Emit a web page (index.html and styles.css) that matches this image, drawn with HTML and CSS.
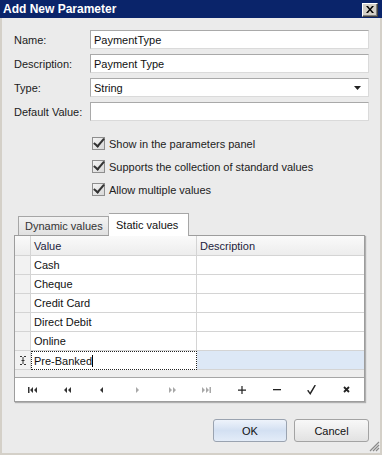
FILE: index.html
```html
<!DOCTYPE html>
<html lang="en">
<head>
    <meta charset="UTF-8">
    <title>Add New Parameter</title>
    <link rel="stylesheet" href="styles.css">
</head>
<body>
<div class="dialog">
    <div class="titlebar">
        <span>Add New Parameter</span>
        <button class="close-button">
            <svg width="8" height="7" viewBox="0 0 8 7"><path d="M0 0h2l2 2.5L6 0h2L5 3.5 8 7H6L4 4.5 2 7H0l3-3.5z" fill="#000"/></svg>
        </button>
    </div>

    <div class="content">
        <div class="field">
            <label>Name:</label>
            <div class="input">PaymentType</div>
        </div>
        <div class="field">
            <label>Description:</label>
            <div class="input">Payment Type</div>
        </div>
        <div class="field">
            <label>Type:</label>
            <div class="input select">String
                <svg width="7" height="4" viewBox="0 0 7 4"><path d="M0 0h7L3.5 4z" fill="#222"/></svg>
            </div>
        </div>
        <div class="field">
            <label>Default Value:</label>
            <div class="input"></div>
        </div>

        <div class="checks">
            <div class="check"><span class="box"></span>Show in the parameters panel</div>
            <div class="check"><span class="box"></span>Supports the collection of standard values</div>
            <div class="check"><span class="box"></span>Allow multiple values</div>
        </div>

        <div class="tabs">
            <div class="tab">Dynamic values</div>
            <div class="tab active">Static values</div>
        </div>

        <div class="grid">
            <div class="row header">
                <div class="ind"></div>
                <div class="cell">Value</div>
                <div class="cell">Description</div>
            </div>
            <div class="row"><div class="ind"></div><div class="cell">Cash</div><div class="cell"></div></div>
            <div class="row"><div class="ind"></div><div class="cell">Cheque</div><div class="cell"></div></div>
            <div class="row"><div class="ind"></div><div class="cell">Credit Card</div><div class="cell"></div></div>
            <div class="row"><div class="ind"></div><div class="cell">Direct Debit</div><div class="cell"></div></div>
            <div class="row"><div class="ind"></div><div class="cell">Online</div><div class="cell"></div></div>
            <div class="row selected">
                <div class="ind">
                    <svg width="6" height="9" viewBox="0 0 6 9"><path d="M0 .5h2m2 0h2M3 1v7M0 8.5h2m2 0h2M1.5 4.5h3" stroke="#333" fill="none"/></svg>
                </div>
                <div class="cell editing">Pre-Banked<span class="caret"></span></div>
                <div class="cell"></div>
            </div>
            <div class="grid-empty"></div>
            <div class="navigator">
                <span><svg width="9" height="6" viewBox="0 0 9 6"><path d="M0 0h1.5v6H0zM5 0v6L2 3zM9 0v6L6 3z" fill="#333"/></svg></span>
                <span><svg width="7" height="6" viewBox="0 0 7 6"><path d="M3 0v6L0 3zM7 0v6L4 3z" fill="#333"/></svg></span>
                <span><svg width="4" height="6" viewBox="0 0 4 6"><path d="M3 0v6L0 3z" fill="#333"/></svg></span>
                <span><svg width="4" height="6" viewBox="0 0 4 6"><path d="M1 0v6l3-3z" fill="#a8a8a8"/></svg></span>
                <span><svg width="7" height="6" viewBox="0 0 7 6"><path d="M0 0v6l3-3zM4 0v6l3-3z" fill="#a8a8a8"/></svg></span>
                <span><svg width="9" height="6" viewBox="0 0 9 6"><path d="M0 0v6l3-3zM4 0v6l3-3zM7.5 0H9v6H7.5z" fill="#a8a8a8"/></svg></span>
                <span><svg width="8" height="8" viewBox="0 0 8 8"><path d="M0 3.5h8v1.2H0zM3.4 0h1.2v8H3.4z" fill="#222"/></svg></span>
                <span><svg width="8" height="2" viewBox="0 0 8 2"><path d="M0 0h8v1.3H0z" fill="#222"/></svg></span>
                <span><svg width="9" height="10" viewBox="0 0 9 10"><path d="M0 5.5 1.5 5 3 7.5 7.5 0 9 .3 3.3 10z" fill="#222"/></svg></span>
                <span><svg width="7" height="7" viewBox="0 0 7 7"><path d="M1 1l5 5M6 1 1 6" stroke="#222" stroke-width="1.8"/></svg></span>
            </div>
        </div>

        <div class="actions">
            <button class="btn default">OK</button>
            <button class="btn">Cancel</button>
        </div>

        <svg class="grip" width="11" height="11" viewBox="0 0 11 11"><path d="M10 1 1 10M10 4 4 10M10 7 7 10" stroke="#8a8a8a" stroke-width="1.2"/></svg>
    </div>
</div>
</body>
</html>
```

FILE: styles.css
```css
body {
    margin: 0;
    font-family: 'Liberation Sans', Arial, sans-serif;
    font-size: 11px;
    color: #1b1b1b;
}
.dialog {
    width: 382px;
    height: 455px;
    display: flex;
    flex-direction: column;
    background-color: #ebebeb;
}
.titlebar {
    height: 18px;
    flex-shrink: 0;
    background-color: #0a246a;
    color: #fff;
    font-size: 12px;
    font-weight: bold;
    display: flex;
    align-items: center;
    justify-content: space-between;
    padding: 0 4px 0 3px;
}
.close-button {
    width: 16px;
    height: 14px;
    padding: 0;
    margin-top: 1px;
    background-color: #d4d0c8;
    border: 1px solid;
    border-color: #fff #404040 #404040 #fff;
    box-shadow: inset -1px -1px 0 #808080;
    display: flex;
    align-items: center;
    justify-content: center;
}
.content {
    flex: 1;
    position: relative;
    border: 2px solid #d4d0c8;
    border-top: none;
    padding: 12px 11px 0 12px;
}
.field {
    display: flex;
    align-items: center;
    height: 19px;
    margin-bottom: 5px;
}
.field label {
    width: 76px;
}
.input {
    flex: 1;
    height: 19px;
    box-sizing: border-box;
    background-color: #fff;
    border: 1px solid;
    border-color: #a9a9a9 #dadada #dadada #a9a9a9;
    padding: 0 3px;
    display: flex;
    align-items: center;
    justify-content: space-between;
    color: #111;
}
.input.select svg {
    margin-right: 4px;
}
.checks {
    margin-top: 11px;
    padding-left: 78px;
}
.check {
    height: 23px;
    display: flex;
    align-items: center;
    color: #222;
}
.box {
    width: 11px;
    height: 11px;
    margin-right: 4px;
    border: 1px solid #8e8e8e;
    background: linear-gradient(135deg, #f4f4f4, #d8d8d8);
    position: relative;
}
.box::after {
    content: '';
    position: absolute;
    left: 3px;
    top: -2px;
    width: 4px;
    height: 9px;
    border: solid #333;
    border-width: 0 2px 2px 0;
    transform: rotate(40deg);
}
.tabs {
    margin-top: 12px;
    height: 22px;
    display: flex;
    align-items: flex-end;
    padding-left: 4px;
}
.tab {
    height: 19px;
    box-sizing: border-box;
    padding: 0 6px;
    white-space: nowrap;
    display: flex;
    align-items: center;
    border: 1px solid #a6a6a6;
    border-bottom: none;
    background: linear-gradient(#f3f3f3, #e0e0e0);
    color: #333;
    width: 91px;
}
.tab.active {
    height: 23px;
    margin-bottom: -1px;
    position: relative;
    z-index: 1;
    width: 80px;
    padding-left: 7px;
    background-color: #fff;
    background-image: none;
    color: #111;
    border-left: none;
}
.grid {
    margin-right: 4px;
    border: 1px solid #9d9d9d;
    background-color: #ececec;
    box-shadow: 1px 1px 1px rgba(0, 0, 0, 0.25);
}
.row {
    display: grid;
    grid-template-columns: 16px 166px 1fr;
    height: 19px;
    background-color: #fff;
}
.row .ind {
    background-color: #f2f2f2;
    border-right: 1px solid #d4d4d4;
    border-bottom: 1px solid #d4d4d4;
    display: flex;
    align-items: center;
    justify-content: center;
}
.row .cell {
    border-right: 1px solid #d4d4d4;
    border-bottom: 1px solid #d4d4d4;
    padding-left: 3px;
    display: flex;
    align-items: center;
    color: #111;
}
.row .cell:last-child {
    border-right: none;
}
.row.header {
    height: 20px;
    background: linear-gradient(#fafafa, #ececec);
}
.row.header .ind,
.row.header .cell {
    background: none;
    color: #1c1c3c;
}
.row.selected .cell:last-child {
    background-color: #dde8f6;
}
.row .cell.editing {
    border: 1px dotted #222;
    padding-left: 2px;
}
.caret {
    width: 1px;
    height: 12px;
    background-color: #000;
}
.grid-empty {
    height: 7px;
    background-color: #eeeeee;
}
.navigator {
    height: 23px;
    border-top: 1px solid #a6a6a6;
    background-color: #fff;
    display: flex;
}
.navigator span {
    flex: 1;
    display: flex;
    align-items: center;
    justify-content: center;
}
.actions {
    display: flex;
    justify-content: flex-end;
    gap: 7px;
    margin-top: 17px;
}
.btn {
    width: 75px;
    height: 23px;
    font-family: inherit;
    font-size: 11px;
    color: #111;
    border: 1px solid #a3a3a3;
    border-radius: 3px;
    background: linear-gradient(#f8f8f8, #e2e2e2);
}
.btn.default {
    width: 74px;
    border-color: #9aa3b0;
    background: linear-gradient(#eef3fb, #d3e0f2 50%, #e3ecf8);
}
.grip {
    position: absolute;
    right: 0;
    bottom: 1px;
}
```
